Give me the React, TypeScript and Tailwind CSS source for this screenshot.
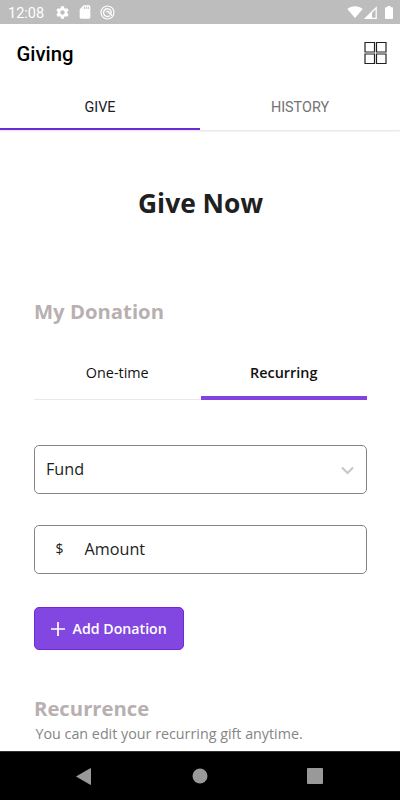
import { ReactNode } from "react";

function StatusBar() {
  return (
    <div className="flex h-6 shrink-0 items-center bg-[#bdbdbd] pl-2 pr-[7px] text-white">
      <span className="w-[47px] pt-[3px] font-[Roboto,sans-serif] text-[14.500px] leading-6">12:08</span>
      <svg className="h-[15px] w-[15px]" viewBox="0 0 24 24" fill="currentColor">
        <path d="M19.43 12.98c.04-.32.07-.64.07-.98s-.03-.66-.07-.98l2.11-1.65c.19-.15.24-.42.12-.64l-2-3.46c-.12-.22-.39-.3-.61-.22l-2.49 1c-.52-.4-1.08-.73-1.69-.98l-.38-2.65A.488.488 0 0 0 14 2h-4c-.25 0-.46.18-.49.42l-.38 2.65c-.61.25-1.17.59-1.69.98l-2.49-1c-.23-.09-.49 0-.61.22l-2 3.46c-.13.22-.07.49.12.64l2.11 1.65c-.04.32-.07.65-.07.98s.03.66.07.98l-2.11 1.65c-.19.15-.24.42-.12.64l2 3.46c.12.22.39.3.61.22l2.49-1c.52.4 1.08.73 1.69.98l.38 2.65c.03.24.24.42.49.42h4c.25 0 .46-.18.49-.42l.38-2.65c.61-.25 1.17-.59 1.69-.98l2.49 1c.23.09.49 0 .61-.22l2-3.46c.12-.22.07-.49-.12-.64l-2.11-1.65zM12 15.5c-1.93 0-3.5-1.57-3.5-3.5s1.57-3.5 3.5-3.5 3.5 1.57 3.5 3.5-1.57 3.5-3.5 3.5z" />
      </svg>
      <svg className="ml-[7px] h-4 w-4" viewBox="0 0 24 24" fill="currentColor">
        <path d="M18 2h-8L4 8v12c0 1.100.9 2 2 2h12c1.100 0 2-.9 2-2V4c0-1.100-.9-2-2-2zm-6.300 5.500h-1.500V4h1.500v3.500zm3 0h-1.500V4h1.500v3.500zm3 0h-1.500V4h1.500v3.500z" />
      </svg>
      <svg className="ml-[7px] h-[15px] w-[15px]" viewBox="0 0 15 15" fill="none" stroke="currentColor">
        <circle cx="7.500" cy="7.500" r="6.500" strokeWidth="1.200" />
        <path d="M9.800 10.700A3.900 3.900 0 1 1 11.200 8.500" strokeWidth="1.400" />
        <path d="M6.300 6.800q2-.8 2.900.9l3 3" strokeWidth="1.500" />
      </svg>
      <svg className="ml-auto h-3 w-4" viewBox="0 0 16 12" fill="currentColor">
        <path d="M.3 3C4.700-.7 11.300-.7 15.700 3L8 12z" />
      </svg>
      <svg className="ml-px h-[13px] w-[13px]" viewBox="0 0 13 13" fill="none">
        <path d="M1.500 12.300L12.200 1.700v10.600z" stroke="currentColor" strokeWidth="1.200" />
        <path d="M1 12.900L8 6v6.900z" fill="currentColor" />
      </svg>
      <svg className="ml-2 h-[13px] w-2" viewBox="0 0 8 13" fill="currentColor">
        <path d="M2.400 0h3.200v1.300h1.600q.8 0 .8.800v10q0 .9-.8.900H.8Q0 13 0 12.100v-10q0-.8.800-.8h1.600z" />
      </svg>
    </div>
  );
}

function Field({ children }: { children: ReactNode }) {
  return (
    <div className="flex h-[49px] w-full items-center rounded-[5px] border border-[#858585] pb-px text-[16.200px] leading-6 text-[#1d1d1d]">
      {children}
    </div>
  );
}

function NavBar() {
  return (
    <nav className="flex h-[49px] shrink-0 items-center border-t border-[#303030] bg-black pl-[76px] pr-[77px] text-[#999]">
      <svg className="h-[17px] w-[15px]" viewBox="0 0 15 17" fill="currentColor">
        <path d="M0 8.500L14.200.2Q15 0 15 .8v15.400q0 .8-.8.600z" />
      </svg>
      <svg className="ml-[101px] h-4 w-4" viewBox="0 0 16 16" fill="currentColor">
        <circle cx="8" cy="8" r="7.500" />
      </svg>
      <span className="ml-auto h-4 w-4 rounded-[1px] bg-[#999]" />
    </nav>
  );
}

export default function App() {
  return (
    <div className="flex h-[800px] w-[400px] flex-col overflow-hidden bg-white font-['Open_Sans',sans-serif]">
      <StatusBar />
      <header className="flex h-[59px] shrink-0 items-center justify-between pl-[16.500px] pr-[13px]">
        <h1 className="font-[Roboto,sans-serif] text-[20.300px] font-medium leading-6 text-black">Giving</h1>
        <svg className="h-[23px] w-[23px]" viewBox="0 0 23 23" fill="none" stroke="#222" strokeWidth="1.200">
          <path d="M1 .5h9.500v9.500H1zM12.500 .5h9.500v9.500h-9.500zM1 12h9.500v9.500H1zM12.500 12h9.500v9.500h-9.500z" />
        </svg>
      </header>
      <div className="grid h-[47px] shrink-0 grid-cols-2 text-center font-[Roboto,sans-serif] text-[14.400px] leading-[49px] shadow-[0_1px_2px_rgba(0,0,0,0.13)]">
        <div className="h-[47px] border-b-2 border-[#6c2bd9] text-[#202020]">GIVE</div>
        <div className="h-[47px] text-[#737373]">HISTORY</div>
      </div>
      <main className="flex flex-1 flex-col items-start overflow-hidden pl-[34px] pr-[33px]">
        <h2 className="mt-[55px] w-full text-center text-[26.400px] font-bold leading-9 text-[#202020]">Give Now</h2>
        <h3 className="mt-[76px] text-[20.300px] font-bold leading-7 text-[#b8b0b0]">My Donation</h3>
        <div className="mt-[29px] grid h-[46px] w-full grid-cols-2 text-center text-[14.400px] leading-[38px] text-[#111]">
          <div className="border-b border-[#e9e9e9]">One-time</div>
          <div className="border-b-4 border-[#8142e0] font-semibold">Recurring</div>
        </div>
        <div className="mt-[45px] w-full">
          <Field>
            <span className="ml-[11px]">Fund</span>
            <svg className="ml-auto mr-3 mt-[3px] h-[9px] w-[13px]" viewBox="0 0 13 9" fill="none" stroke="#c6c6c6" strokeWidth="2">
              <path d="M1 1.500l5.500 5.500L12 1.500" />
            </svg>
          </Field>
        </div>
        <div className="mt-[31px] w-full">
          <Field>
            <span className="ml-[20.500px] w-[29px] text-[14px]">$</span>
            <span>Amount</span>
          </Field>
        </div>
        <button className="mt-[33px] flex h-[43px] w-[150px] items-center rounded-[5px] border border-[#7328d8] bg-[#8247e0] pl-4 text-[14.200px] font-semibold text-white">
          <svg className="mr-[7.500px] h-[14px] w-[14px]" viewBox="0 0 14 14" stroke="currentColor" strokeWidth="1.700">
            <path d="M7 0v14M0 7h14" />
          </svg>
          Add Donation
        </button>
        <h3 className="mt-[44px] text-[20.300px] font-bold leading-7 text-[#b8b0b0]">Recurrence</h3>
        <p className="ml-[1.500px] mt-px text-[14.300px] leading-[22px] text-[#858585]">You can edit your recurring gift anytime.</p>
      </main>
      <NavBar />
    </div>
  );
}
